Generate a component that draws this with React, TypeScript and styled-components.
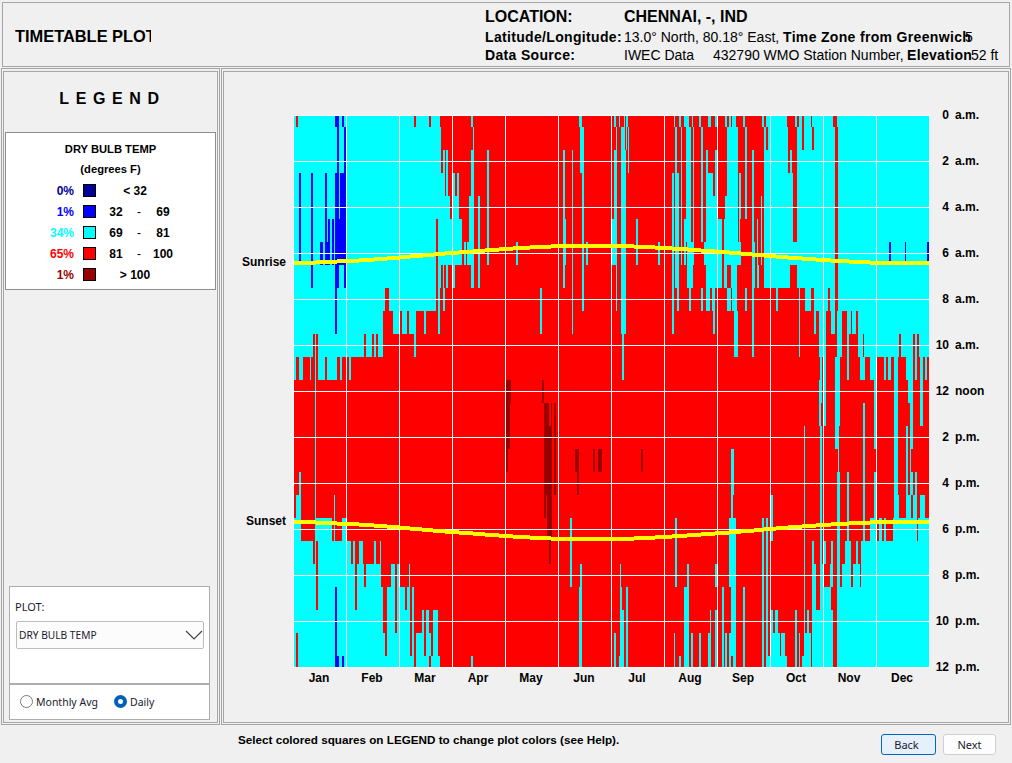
import React from "react";
import styled, { createGlobalStyle } from "styled-components";

const Global = createGlobalStyle`
  html, body { margin: 0; padding: 0; background: #f0f0f0; }
  body { font-family: "Liberation Sans", Arial, sans-serif; color: #000; }
`;

type Iv = number[];
/* Cyan / blue / dark-red runs per hour row, in 3x crop coordinates of each half of the chart */
const LC: Record<number, Iv> = {
  0: [12,18,24,372,378,417,423,450,543,549,867,876,972,978,987,990],
  1: [12,453,549,552,870,882,978,981],
  2: [12,453,459,465,468,474,543,552,591,597,819,825,846,849,870,882,972,981],
  3: [12,465,468,474,489,495,501,507,543,552,591,597,819,825,846,849,876,882,972,981],
  4: [12,480,489,507,537,552,564,570,591,597,819,825,846,849,876,882,972,981],
  5: [12,438,444,516,537,552,564,570,591,597,819,828,846,849,876,882,966,981],
  6: [12,438,444,516,522,528,531,552,564,570,591,597,678,684,819,828,846,849,876,882,888,894,966,981],
  7: [12,438,444,453,459,462,468,474,489,495,543,552,564,570,819,825,846,849,876,882,978,981],
  8: [12,285,297,438,444,450,459,465,750,756,846,849,876,882,978,981],
  9: [12,279,309,330,336,351,357,378,402,408,444,450,750,756,846,849],
  10: [12,69,75,78,84,222,228,246,252,258,264,279,372,378],
  11: [12,18,27,39,60,63,75,78,84,105,111,141,150,156,177,183],
  12: [75,78], 13: [75,78], 14: [75,78], 15: [75,78],
  16: [27,33,75,78],
  17: [18,33,75,78,132,135],
  18: [12,33,75,126,132,135,156,168,840,846],
  19: [12,69,75,78,84,183,189,195,207,219,252,258,270,273,840,846],
  20: [12,78,84,195,201,222,228,273,303,315,321,327,357,360,840,846,870,876],
  21: [12,78,84,195,201,279,291,315,321,345,351,360,366,372,867,876],
  22: [12,279,291,315,321,360,366,372,396,402,408,417,429,444,867,876],
  23: [12,18,24,285,291,360,366,372,378,402,408,423,429,444,867,876,972,978],
  24: [12,18,24,372,378,417,423,450,543,549,867,876,972,978,987,990],
};
const RC: Record<number, Iv> = {
  0: [12,15,18,24,162,165,177,183,192,207,216,219,237,243,264,273,285,291,315,321,327,333,336,348,369,375,426,432,438,501,525,531,537,546,552,573,576,639,651,927],
  1: [3,15,18,21,24,27,165,171,183,186,198,213,219,222,243,249,321,354,375,381,432,438,444,504,531,546,552,576,582,645,654,927],
  2: [3,18,24,27,165,171,183,186,198,213,219,222,243,249,258,264,285,291,321,354,375,381,396,402,432,504,510,516,531,645,654,927],
  3: [3,18,156,162,165,177,183,186,198,213,219,222,243,249,258,279,285,291,321,354,357,363,375,381,396,402,432,519,531,645,654,927],
  4: [3,18,156,162,165,177,183,186,198,213,219,222,243,249,258,291,315,354,357,363,375,381,396,402,423,426,432,519,531,645,654,927],
  5: [3,18,48,54,156,162,165,177,183,186,192,213,219,222,243,249,258,306,312,354,357,360,396,402,411,414,423,426,432,519,531,645,654,927],
  6: [3,18,48,54,114,120,156,162,165,177,183,186,192,198,201,222,252,306,312,363,396,405,411,414,423,426,432,645,654,927],
  7: [3,18,156,162,165,177,201,219,258,306,312,321,333,351,396,405,411,417,432,510,531,645,654,927],
  8: [3,18,156,162,171,177,207,213,243,249,258,270,276,285,321,333,336,351,375,381,396,402,468,474,537,540,555,573,582,624,630,645,654,927],
  9: [3,18,156,162,279,285,342,354,396,402,537,540,582,588,597,618,633,645,651,666,681,693,696,708,714,927],
  10: [6,12,342,354,396,402,537,540,597,618,651,666,681,687,714,729,732,837,843,879,885,891,897,927],
  11: [6,12,600,606,612,618,645,660,681,687,720,735,750,771,792,798,804,813,822,834,858,879,885,891,900,909,915,921],
  12: [597,606,612,618,645,660,762,768,822,834,864,879,900,909],
  13: [597,603,612,618,645,660,729,735,762,768,822,834,870,879,900,909],
  14: [552,555,600,606,645,657,729,735,762,768,822,834,858,864,870,879],
  15: [333,342,552,555,600,606,654,657,729,735,822,834,858,864,870,873],
  16: [333,342,552,555,600,606,651,660,681,687,729,735,762,768,822,834,858,864,870,879,885,891],
  17: [333,339,453,459,552,555,600,606,651,660,681,687,729,735,762,768,822,837,858,873,879,891,900,915],
  18: [165,171,327,348,426,432,438,444,453,459,552,555,600,606,651,660,681,687,729,735,750,771,777,786,792,798,820,891,894,927],
  19: [165,171,327,348,426,432,438,444,552,555,576,582,600,606,612,618,633,639,651,660,675,693,708,714,723,927],
  20: [0,3,165,171,201,207,285,291,327,348,426,432,438,444,552,555,576,588,600,612,630,639,651,660,666,693,699,720,723,927],
  21: [0,6,18,24,192,207,306,312,333,348,369,375,426,432,438,444,552,555,576,588,600,633,651,927],
  22: [0,12,18,24,192,207,270,273,285,291,306,312,333,348,369,375,426,432,438,444,453,459,465,474,525,531,552,555,561,567,576,639,651,927],
  23: [0,12,18,24,162,165,192,207,213,219,237,243,264,273,285,291,306,312,315,321,327,348,369,375,426,432,438,444,453,480,483,495,525,531,537,540,552,573,576,639,651,927],
  24: [0,12,18,24,162,165,177,183,192,207,213,219,237,243,264,273,285,291,306,312,315,321,327,333,339,348,369,375,426,432,438,501,525,531,537,540,546,573,576,639,651,927],
};
const LB: Record<number, Iv> = {
  0: [135,147,156,162], 1: [141,147,162,168], 2: [141,147,162,168],
  3: [27,33,63,69,105,111,135,147,150,168], 4: [27,33,63,69,105,111,135,147,150,168],
  5: [27,33,63,69,105,111,114,120,126,132,135,168],
  6: [27,33,63,69,90,99,105,120,126,132,135,168],
  7: [63,69,135,147,162,168], 8: [135,141], 9: [135,141],
  21: [135,141], 22: [135,141], 23: [135,141], 24: [135,147,156,162],
};
const RB: Record<number, Iv> = { 6: [807,813,855,858,921,927] };
const LD: Record<number, Iv> = {
  12: [648,663,756,762],
  13: [648,660,762,777,783,786,792,798],
  14: [648,660,762,786,792,798],
  15: [648,654,762,786,792,798,855,867,909,915,924,936],
  16: [762,786,792,798,861,867],
  17: [762,768,771,786],
  18: [771,786],
  19: [777,783],
};
const RD: Record<number, Iv> = { 15: [63,69] };

const SUNRISE_L = [[12,78,459],[78,141,456],[141,207,453],[207,252,450],[252,291,447],[291,330,444],[330,360,441],[360,399,438],[399,432,435],[432,465,432],[465,507,429],[507,549,425],[549,585,423],[585,627,420],[627,669,417],[669,720,414],[720,783,411],[783,990,408]];
const SUNRISE_R = [[0,42,408],[42,105,411],[105,156,414],[156,204,417],[204,243,420],[243,285,423],[285,327,426],[327,363,429],[363,396,432],[396,432,435],[432,468,437],[468,504,441],[504,546,444],[546,588,447],[588,633,450],[633,687,453],[687,750,456],[750,927,459]];
const SUNSET_L = [[12,78,396],[78,141,399],[141,207,402],[207,252,405],[252,291,408],[291,330,411],[330,360,413],[360,396,417],[396,429,420],[429,465,423],[465,507,426],[507,549,429],[549,585,432],[585,627,435],[627,669,438],[669,720,441],[720,783,444],[783,990,447]];
const SUNSET_R = [[0,42,447],[42,105,444],[105,156,441],[156,201,438],[201,243,435],[243,285,432],[285,327,429],[327,363,426],[363,402,423],[402,432,420],[432,468,417],[468,504,414],[504,546,411],[546,588,408],[588,633,405],[633,687,402],[687,750,399],[750,927,396]];

/* chart origin on the page is (293,115); the white rule sits on its top and left edges */
const OX = 293;
const OY = 115;
const rowTop = (r: number) => (r === 0 ? 116 : 127 + (r - 1) * 23) - OY;
const rowBottom = (r: number) => 127 + r * 23 - OY - (r === 24 ? 12 : 0);

const Runs: React.FC<{ data: Record<number, Iv>; base: number; fill: string }> = ({ data, base, fill }) => (
  <>
    {Object.entries(data).flatMap(([k, iv]) => {
      const r = Number(k);
      const out: React.ReactNode[] = [];
      for (let i = 0; i < iv.length; i += 2) {
        const x0 = Math.round(base + iv[i] / 3) - OX;
        const x1 = Math.round(base + iv[i + 1] / 3) - OX;
        out.push(<rect key={`${r}-${i}`} x={x0} y={rowTop(r)} width={x1 - x0} height={rowBottom(r) - rowTop(r)} fill={fill} />);
      }
      return out;
    })}
  </>
);

const Steps: React.FC<{ data: number[][]; base: number; y0: number }> = ({ data, base, y0 }) => (
  <>
    {data.map(([a, b, y]) => {
      const x0 = Math.round(base + a / 3) - OX;
      const x1 = Math.round(base + b / 3) - OX;
      return <rect key={a} x={x0} y={Math.round(y0 + y / 3) - 2 - OY} width={x1 - x0} height={4} fill="#ffff00" />;
    })}
  </>
);

const Chart: React.FC = () => (
  <ChartSvg width={637} height={553} viewBox="0 0 637 553" shapeRendering="crispEdges">
    <rect x={0} y={0} width={636} height={553} fill="#fff" />
    <rect x={1} y={1} width={635} height={551} fill="#ff0000" />
    <Runs data={LC} base={290} fill="#00ffff" />
    <Runs data={RC} base={620} fill="#00ffff" />
    <Runs data={LB} base={290} fill="#0000ff" />
    <Runs data={RB} base={620} fill="#0000ff" />
    <Runs data={LD} base={290} fill="#990000" />
    <Runs data={RD} base={620} fill="#990000" />
    {Array.from({ length: 11 }, (_, i) => (
      <rect key={`v${i}`} x={346 - OX + i * 53} y={0} width={1} height={553} fill="#fff" />
    ))}
    {Array.from({ length: 11 }, (_, i) => (
      <rect key={`h${i}`} x={0} y={161 - OY + i * 46} width={636} height={1} fill="#fff" />
    ))}
    <Steps data={SUNRISE_L} base={290} y0={110} />
    <Steps data={SUNRISE_R} base={620} y0={110} />
    <Steps data={SUNSET_L} base={290} y0={390} />
    <Steps data={SUNSET_R} base={620} y0={390} />
  </ChartSvg>
);

const Page = styled.div`
  width: 1012px;
  height: 763px;
  overflow: hidden;
  display: flex;
  flex-direction: column;
  background: #f0f0f0;
`;
const Header = styled.header`
  box-sizing: border-box;
  margin: 2px 2px 0 2px;
  height: 65px;
  flex: none;
  border: 1px solid #a6a6a6;
  display: flex;
`;
const Title = styled.h1`
  margin: 4px 0 0 12px;
  width: 136px;
  align-self: center;
  font-size: 16.4px;
  font-weight: 700;
  white-space: nowrap;
  overflow: hidden;
`;
const Info = styled.div`
  margin-left: 334px;
  width: 518px;
  overflow: hidden;
  padding-top: 4px;
  display: flex;
  flex-direction: column;
`;
const InfoRow = styled.div<{ $h: number }>`
  display: flex;
  height: ${(p) => p.$h}px;
  align-items: center;
  white-space: nowrap;
`;
const Cell = styled.span<{ $w?: number; $bold?: boolean; $size?: number }>`
  flex: none;
  width: ${(p) => (p.$w ? `${p.$w}px` : "auto")};
  font-size: ${(p) => p.$size ?? 14}px;
  font-weight: ${(p) => (p.$bold ? 700 : 400)};
  letter-spacing: ${(p) => (p.$bold && !p.$size ? 0.33 : 0)}px;
`;
const Body = styled.div`
  display: flex;
  margin: 1px 1px 0 1px;
  height: 657px;
  flex: none;
  gap: 1px;
`;
const Panel = styled.section`
  box-sizing: border-box;
  border-style: double;
  border-color: #a6a6a6;
  border-width: 4px 3px 3px 3px;
`;
const Sidebar = styled(Panel)`
  width: 219px;
  flex: none;
  display: flex;
  flex-direction: column;
  padding: 0 1px 2px;
`;
const LegendTitle = styled.div`
  text-align: center;
  font-size: 16px;
  font-weight: 700;
  letter-spacing: 6.6px;
  padding: 17px 0 0 4px;
  line-height: 20px;
  height: 43px;
`;
const LegendBox = styled.div`
  box-sizing: border-box;
  width: 211px;
  height: 158px;
  background: #fff;
  border: 1px solid #8e8e8e;
  font-size: 12px;
  font-weight: 700;
`;
const LegendHead = styled.div`
  text-align: center;
  line-height: 20px;
  font-size: 11.2px;
  &:first-child { margin-top: 6px; }
`;
const LegendRows = styled.div`
  margin-top: 1px;
`;
const LegendRow = styled.div`
  display: grid;
  grid-template-columns: 68px 9px 13px 40px 6px 42px;
  height: 21px;
  align-items: center;
  text-align: center;
`;
const Pct = styled.span<{ $c: string }>`
  grid-column: 1;
  color: ${(p) => p.$c};
  text-align: right;
`;
const Swatch = styled.span<{ $c: string }>`
  grid-column: 3;
  box-sizing: border-box;
  width: 13px;
  height: 13px;
  background: ${(p) => p.$c};
  border: 1px solid #000;
`;
const Single = styled.span`
  grid-column: 4 / 7;
  padding-right: 10px;
`;
const Low = styled.span`
  grid-column: 4;
`;
const Dash = styled.span`
  grid-column: 5;
  font-weight: 400;
`;
const High = styled.span`
  grid-column: 6;
`;
const Spacer = styled.div`
  flex: 1;
`;
const WhiteBox = styled.div<{ $h: number }>`
  box-sizing: border-box;
  flex: none;
  width: 201px;
  height: ${(p) => p.$h}px;
  margin-left: 4px;
  background: #fff;
  border: 1px solid #adadad;
  font-family: "Noto Sans", "Open Sans", sans-serif;
  font-size: 11px;
  color: #1a1a2e;
`;
const PlotLabel = styled.div`
  padding: 12px 0 0 5px;
  line-height: 16px;
`;
const Select = styled.div`
  box-sizing: border-box;
  margin: 6px 5px 0 6px;
  height: 28px;
  border: 1px solid #bcbcbc;
  border-radius: 2px;
  background: #fcfcfc;
  padding-left: 2px;
  display: flex;
  align-items: center;
  justify-content: space-between;
  font-size: 10.2px;
`;
const RadioRow = styled.div`
  display: flex;
  align-items: center;
  height: 100%;
  padding: 0 0 1px 10px;
  box-sizing: border-box;
  font-size: 10.5px;
`;
const RadioItem = styled.label<{ $w: number }>`
  display: flex;
  align-items: center;
  width: ${(p) => p.$w}px;
  gap: 3px;
`;
const RadioDot = styled.span<{ $on?: boolean }>`
  box-sizing: border-box;
  width: 13px;
  height: 13px;
  border-radius: 50%;
  background: #fff;
  border: ${(p) => (p.$on ? "4px solid #0060b8" : "1px solid #7a7a7a")};
`;
const Main = styled(Panel)`
  width: 790px;
  flex: none;
  display: grid;
  grid-template-columns: 69px 637px 1fr;
  grid-template-rows: 553px auto;
  padding-top: 43px;
`;
const SunCol = styled.div`
  position: relative;
`;
const SunLabel = styled.span<{ $top: number; $right: number }>`
  position: absolute;
  top: ${(p) => p.$top}px;
  right: ${(p) => p.$right}px;
  font-size: 12px;
  font-weight: 700;
  line-height: 14px;
`;
const ChartSvg = styled.svg`
  display: block;
`;
const Hours = styled.div`
  display: flex;
  flex-direction: column;
  margin-top: -8px;
  font-size: 12px;
  font-weight: 700;
`;
const Hour = styled.div`
  flex: none;
  height: 46px;
  display: grid;
  grid-template-columns: 19px 1fr;
  column-gap: 6px;
  line-height: 16px;
  white-space: nowrap;
`;
const HourNum = styled.span`
  text-align: right;
`;
const Months = styled.div`
  grid-column: 2;
  display: flex;
  margin: 2px 0 0 -0.5px;
  font-size: 12px;
  font-weight: 700;
`;
const Month = styled.div`
  width: 53px;
  flex: none;
  text-align: center;
  line-height: 16px;
`;
const Footer = styled.footer`
  flex: 1;
  display: flex;
  align-items: flex-start;
`;
const Message = styled.div`
  margin: 8px 0 0 238px;
  width: 643px;
  font-size: 11.7px;
  font-weight: 700;
  line-height: 14px;
`;
const Btn = styled.button<{ $primary?: boolean }>`
  box-sizing: border-box;
  height: 21px;
  width: ${(p) => (p.$primary ? 55 : 53)}px;
  margin: 9px 7px 0 0;
  padding: 0 ${(p) => (p.$primary ? 4 : 0)}px 0 0;
  border-radius: 3px;
  border: 1px solid ${(p) => (p.$primary ? "#0067c0" : "#cfcfcf")};
  background: ${(p) => (p.$primary ? "#e6f0fa" : "#fdfdfd")};
  font-family: "Noto Sans", "Open Sans", sans-serif;
  font-size: 11px;
  color: #1a1a2e;
`;

const LEGEND = [
  { pct: "0%", c: "#000099", single: "< 32" },
  { pct: "1%", c: "#0000ff", lo: "32", hi: "69" },
  { pct: "34%", c: "#00ffff", lo: "69", hi: "81" },
  { pct: "65%", c: "#ff0000", lo: "81", hi: "100" },
  { pct: "1%", c: "#990000", single: "> 100" },
];
const HOURS = [["0","a.m."],["2","a.m."],["4","a.m."],["6","a.m."],["8","a.m."],["10","a.m."],["12","noon"],["2","p.m."],["4","p.m."],["6","p.m."],["8","p.m."],["10","p.m."],["12","p.m."]];
const MONTHS = ["Jan","Feb","Mar","Apr","May","Jun","Jul","Aug","Sep","Oct","Nov","Dec"];

export default function App() {
  return (
    <Page>
      <Global />
      <Header>
        <Title>TIMETABLE PLOT</Title>
        <Info>
          <InfoRow $h={20}>
            <Cell $w={139} $bold $size={16}>LOCATION:</Cell>
            <Cell $bold $size={16}>CHENNAI, -, IND</Cell>
          </InfoRow>
          <InfoRow $h={19}>
            <Cell $w={139} $bold>Latitude/Longitude:</Cell>
            <Cell $w={159}>13.0° North, 80.18° East,</Cell>
            <Cell $w={182} $bold>Time Zone from Greenwich</Cell>
            <Cell>5</Cell>
          </InfoRow>
          <InfoRow $h={18}>
            <Cell $w={139} $bold>Data Source:</Cell>
            <Cell $w={89}>IWEC Data</Cell>
            <Cell $w={194}>432790 WMO Station Number,</Cell>
            <Cell $w={64} $bold>Elevation</Cell>
            <Cell>52 ft</Cell>
          </InfoRow>
        </Info>
      </Header>
      <Body>
        <Sidebar>
          <LegendTitle>LEGEND</LegendTitle>
          <LegendBox>
            <LegendHead>DRY BULB TEMP</LegendHead>
            <LegendHead>(degrees F)</LegendHead>
            <LegendRows>
              {LEGEND.map((l, i) => (
                <LegendRow key={i}>
                  <Pct $c={l.c}>{l.pct}</Pct>
                  <Swatch $c={l.c} />
                  {l.single ? (
                    <Single>{l.single}</Single>
                  ) : (
                    <>
                      <Low>{l.lo}</Low>
                      <Dash>-</Dash>
                      <High>{l.hi}</High>
                    </>
                  )}
                </LegendRow>
              ))}
            </LegendRows>
          </LegendBox>
          <Spacer />
          <WhiteBox $h={98}>
            <PlotLabel>PLOT:</PlotLabel>
            <Select>
              DRY BULB TEMP
              <svg width="18" height="10" viewBox="0 0 18 10" fill="none" stroke="#444" strokeWidth="1.2">
                <path d="M1 1 L9 9 L17 1" />
              </svg>
            </Select>
          </WhiteBox>
          <WhiteBox $h={36}>
            <RadioRow>
              <RadioItem $w={94}><RadioDot />Monthly Avg</RadioItem>
              <RadioItem $w={50}><RadioDot $on />Daily</RadioItem>
            </RadioRow>
          </WhiteBox>
        </Sidebar>
        <Main>
          <SunCol>
            <SunLabel $top={140} $right={7}>Sunrise</SunLabel>
            <SunLabel $top={399} $right={7}>Sunset</SunLabel>
          </SunCol>
          <Chart />
          <Hours>
            {HOURS.map(([n, w], i) => (
              <Hour key={i}>
                <HourNum>{n}</HourNum>
                <span>{w}</span>
              </Hour>
            ))}
          </Hours>
          <Months>
            {MONTHS.map((m) => (
              <Month key={m}>{m}</Month>
            ))}
          </Months>
        </Main>
      </Body>
      <Footer>
        <Message>Select colored squares on LEGEND to change plot colors (see Help).</Message>
        <Btn $primary>Back</Btn>
        <Btn>Next</Btn>
      </Footer>
    </Page>
  );
}
